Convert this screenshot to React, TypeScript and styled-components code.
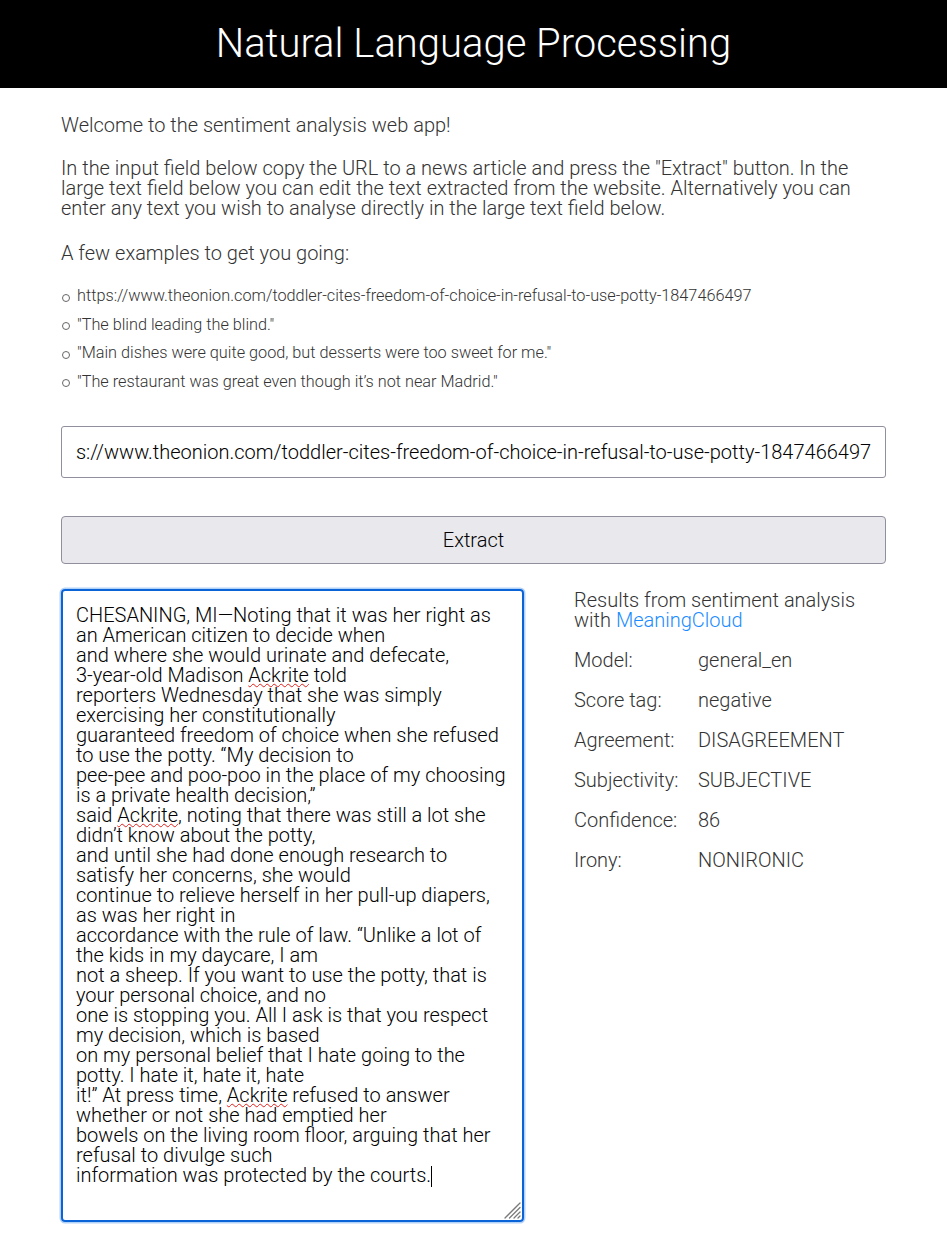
import React, { useEffect, useRef } from "react";
import styled, { createGlobalStyle } from "styled-components";

const Global = createGlobalStyle`
  html, body { margin: 0; padding: 0; background: #fff; }
  body { font-family: Roboto, "Liberation Sans", sans-serif; font-weight: 300; color: #333; }
  * { box-sizing: border-box; }
`;

const Header = styled.header`
  background: #000;
  height: 88px;
  display: flex;
  align-items: center;
  justify-content: center;
`;

const Title = styled.h1`
  margin: 0;
  color: #fff;
  font-weight: 300;
  font-size: 40px;
  line-height: 1;
`;

const Main = styled.main`
  padding: 0 61px 20px;
`;

const Intro = styled.section`
  display: flex;
  flex-direction: column;
  gap: 23px;
  padding-top: 27px;
`;

const Para = styled.p<{ $extra?: number }>`
  margin: ${(p) => p.$extra ?? 0}px 0 0;
  font-size: 20px;
  line-height: 20px;
`;

const Examples = styled.ul`
  margin: 19px 0 0;
  padding: 0 0 0 16px;
  list-style: none;
  font-size: 16.25px;
  line-height: 28.5px;
`;

const Example = styled.li`
  position: relative;
  &::before {
    content: "";
    position: absolute;
    left: -15px;
    top: 11.5px;
    width: 6px;
    height: 6px;
    border: 1px solid #666;
    border-radius: 50%;
  }
`;

const UrlInput = styled.input`
  display: block;
  width: 100%;
  height: 52px;
  margin-top: 30px;
  padding: 0 14px;
  border: 1px solid #8f8f9d;
  border-radius: 3px;
  font-family: Roboto, sans-serif;
  font-weight: 300;
  font-size: 20px;
  color: #000;
  outline: none;
`;

const ExtractButton = styled.button`
  display: block;
  width: 100%;
  height: 48px;
  margin-top: 38px;
  background: #e9e9ed;
  border: 1px solid #8f8f9d;
  border-radius: 4px;
  font-family: Roboto, sans-serif;
  font-weight: 300;
  font-size: 20px;
  color: #000;
`;

const Lower = styled.section`
  display: flex;
  gap: 50px;
  margin-top: 25px;
`;

const TextFrame = styled.div`
  position: relative;
  width: 463px;
  height: 633px;
  flex: none;
`;

const TextBox = styled.div`
  width: 100%;
  height: 100%;
  padding: 14px 13px;
  border: 2px solid #0b63d8;
  border-radius: 4px;
  box-shadow: 0 0 0 1.5px #b3d2f7;
  font-family: Roboto, sans-serif;
  font-weight: 300;
  font-size: 20px;
  line-height: 20px;
  color: #000;
  white-space: pre-wrap;
  overflow: hidden;
  outline: none;
`;

const Grip = styled.svg`
  position: absolute;
  right: 2px;
  bottom: 2px;
  width: 20px;
  height: 20px;
  pointer-events: none;
`;

const Misspelled = styled.span`
  text-decoration: underline wavy #e0201b;
  text-decoration-thickness: 1px;
  text-underline-offset: 1px;
`;

const Caret = styled.span`
  display: inline-block;
  width: 0;
  height: 21px;
  border-left: 1px solid #000;
  vertical-align: -5px;
`;

const Results = styled.aside`
  padding-top: 1px;
  display: flex;
  flex-direction: column;
`;

const ResultsTitle = styled.p`
  margin: 0;
  font-size: 20px;
  line-height: 20px;
`;

const Link = styled.a`
  color: #1a8cff;
  text-decoration: none;
`;

const Grid = styled.dl`
  margin: 20px 0 0;
  display: grid;
  grid-template-columns: 124px auto;
  row-gap: 20px;
  font-size: 20px;
  line-height: 20px;
`;

const Term = styled.dt`
  margin: 0;
`;

const Value = styled.dd`
  margin: 0;
`;

const URL = "https://www.theonion.com/toddler-cites-freedom-of-choice-in-refusal-to-use-potty-1847466497";

const lines: string[] = [
  "CHESANING, MI—Noting that it was her right as",
  "an American citizen to decide when",
  "and where she would urinate and defecate,",
  "3-year-old Madison |Ackrite| told",
  "reporters Wednesday that she was simply",
  "exercising her constitutionally",
  "guaranteed freedom of choice when she refused",
  "to use the potty. “My decision to",
  "pee-pee and poo-poo in the place of my choosing",
  "is a private health decision,”",
  "said |Ackrite|, noting that there was still a lot she",
  "didn’t know about the potty,",
  "and until she had done enough research to",
  "satisfy her concerns, she would",
  "continue to relieve herself in her pull-up diapers,",
  "as was her right in",
  "accordance with the rule of law. “Unlike a lot of",
  "the kids in my daycare, I am",
  "not a sheep. If you want to use the potty, that is",
  "your personal choice, and no",
  "one is stopping you. All I ask is that you respect",
  "my decision, which is based",
  "on my personal belief that I hate going to the",
  "potty. I hate it, hate it, hate",
  "it!” At press time, |Ackrite| refused to answer",
  "whether or not she had emptied her",
  "bowels on the living room floor, arguing that her",
  "refusal to divulge such",
  "information was protected by the courts.",
];

const results: [string, string][] = [
  ["Model:", "general_en"],
  ["Score tag:", "negative"],
  ["Agreement:", "DISAGREEMENT"],
  ["Subjectivity:", "SUBJECTIVE"],
  ["Confidence:", "86"],
  ["Irony:", "NONIRONIC"],
];

function renderLine(line: string, i: number) {
  const parts = line.split("|");
  return (
    <React.Fragment key={i}>
      {parts.map((p, j) =>
        j % 2 === 1 ? <Misspelled key={j}>{p}</Misspelled> : <React.Fragment key={j}>{p}</React.Fragment>
      )}
      {i < lines.length - 1 ? "\n" : null}
    </React.Fragment>
  );
}

export default function App() {
  const inputRef = useRef<HTMLInputElement>(null);
  useEffect(() => {
    const el = inputRef.current;
    if (el) el.scrollLeft = el.scrollWidth;
  }, []);
  return (
    <>
      <Global />
      <Header>
        <Title>Natural Language Processing</Title>
      </Header>
      <Main>
        <Intro>
          <Para>Welcome to the sentiment analysis web app!</Para>
          <Para>
            In the input field below copy the URL to a news article and press the "Extract" button. In the large text
            field below you can edit the text extracted from the website. Alternatively you can enter any text you wish
            to analyse directly in the large text field below.
          </Para>
          <Para $extra={2}>A few examples to get you going:</Para>
        </Intro>
        <Examples>
          <Example>{URL}</Example>
          <Example>"The blind leading the blind."</Example>
          <Example>"Main dishes were quite good, but desserts were too sweet for me."</Example>
          <Example>"The restaurant was great even though it’s not near Madrid."</Example>
        </Examples>
        <UrlInput ref={inputRef} type="text" defaultValue={URL} />
        <ExtractButton type="button">Extract</ExtractButton>
        <Lower>
          <TextFrame>
            <TextBox role="textbox" aria-multiline="true">
              {lines.map(renderLine)}
              <Caret />
            </TextBox>
            <Grip viewBox="0 0 20 20">
              <g stroke="#7a7a7a" strokeWidth="1.3" strokeLinecap="round">
                <line x1="18" y1="3" x2="3" y2="18" />
                <line x1="18" y1="7.5" x2="7.5" y2="18" />
                <line x1="18" y1="12" x2="12" y2="18" />
                <line x1="18" y1="16" x2="16" y2="18" />
              </g>
            </Grip>
          </TextFrame>
          <Results>
            <ResultsTitle>
              Results from sentiment analysis with <Link href="#">MeaningCloud</Link>
            </ResultsTitle>
            <Grid>
              {results.map(([k, v]) => (
                <React.Fragment key={k}>
                  <Term>{k}</Term>
                  <Value>{v}</Value>
                </React.Fragment>
              ))}
            </Grid>
          </Results>
        </Lower>
      </Main>
    </>
  );
}
